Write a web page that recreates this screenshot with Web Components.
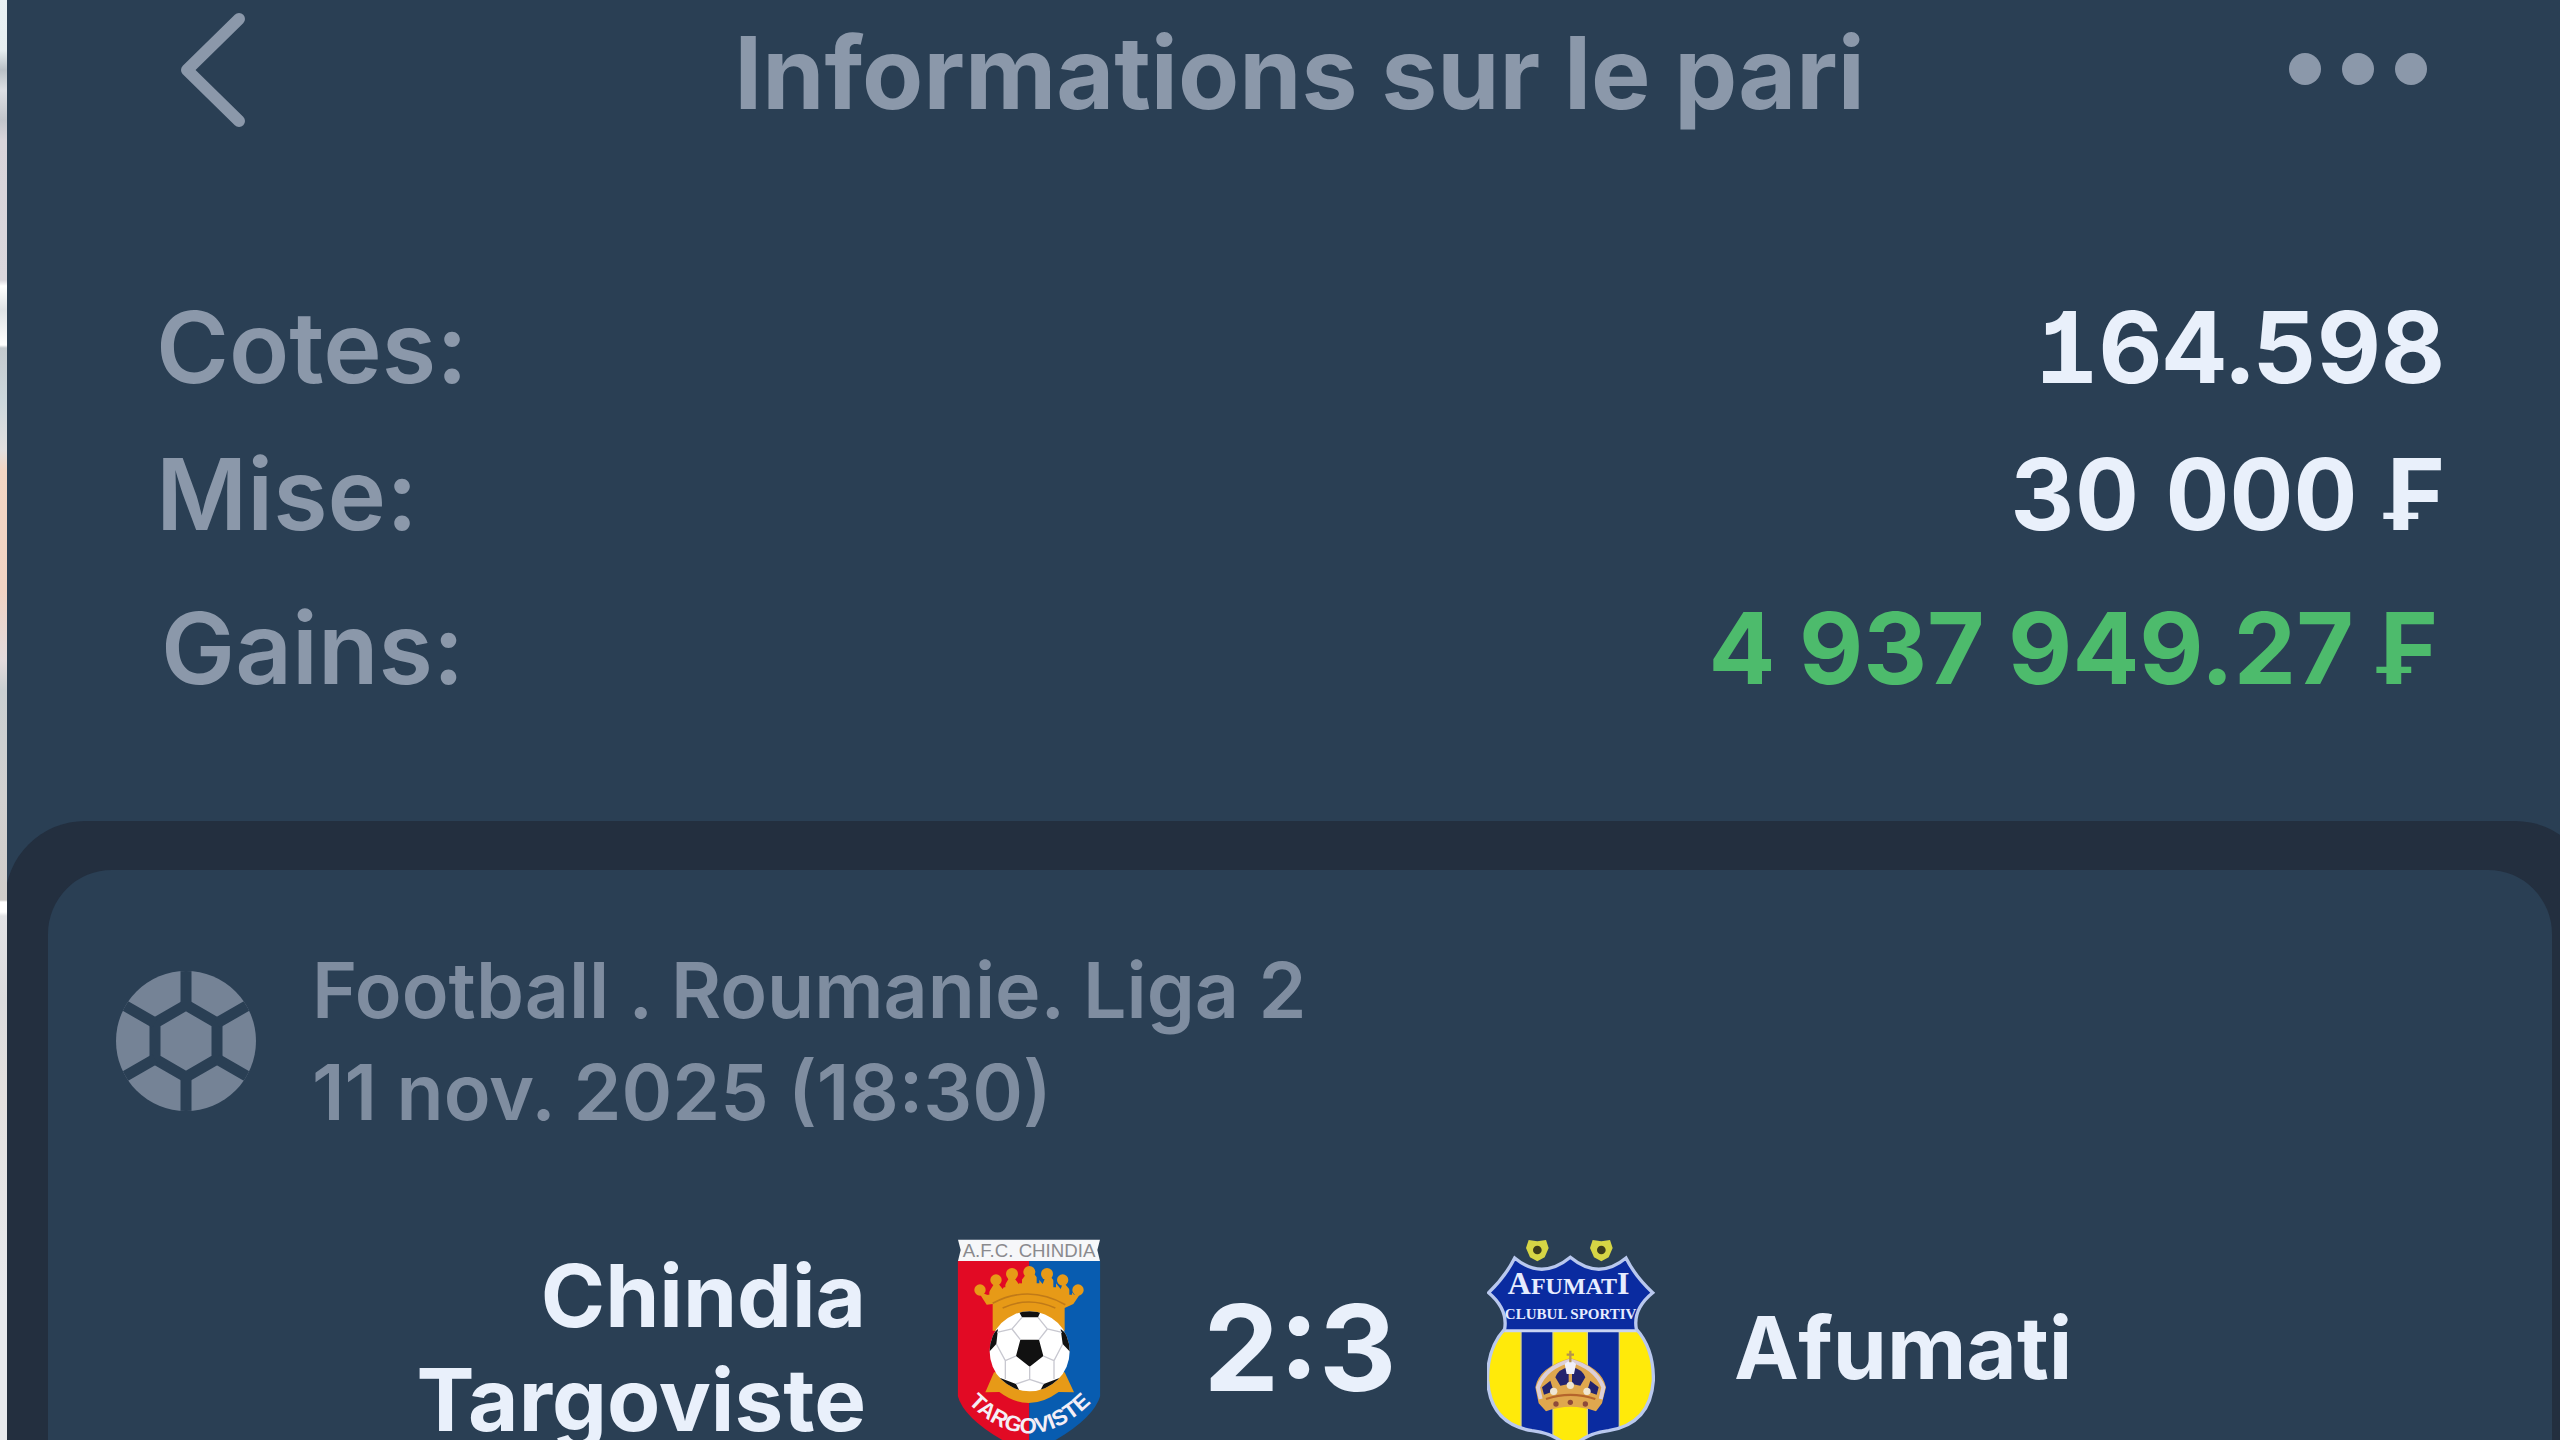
<!DOCTYPE html>
<html lang="fr">
<head>
<meta charset="utf-8">
<title>Informations sur le pari</title>
<style>
    body {
        margin: 0;
        height: 100vh;
        overflow: hidden;
        background: #2a3f54;
        color: #8b98aa;
        font-family: Inter, "Liberation Sans", sans-serif;
    }
</style>
</head>
<body>

<bet-page>
    <bet-header slot="header">Informations sur le pari</bet-header>
    <bet-summary slot="summary">
        <bet-row label="Cotes:">164.598</bet-row>
        <bet-row label="Mise:">30 000 ₣</bet-row>
        <bet-row label="Gains:" win>4 937 949.27 ₣</bet-row>
    </bet-summary>
    <match-card>
        <span slot="league">Football . Roumanie. Liga 2</span>
        <time slot="date" datetime="2025-11-11T18:30">11 nov. 2025 (18:30)</time>
        <span slot="home">Chindia Targoviste</span>
        <crest-chindia slot="home-crest"></crest-chindia>
        <span slot="score">2:3</span>
        <crest-afumati slot="away-crest"></crest-afumati>
        <span slot="away">Afumati</span>
    </match-card>
</bet-page>

<template id="bet-page">
    <style>
        :host { display: flex; height: 100%; }
        .edge {
            flex: 0 0 7px;
            background: linear-gradient(#e9f1f4 0, #e6eef1 50px, #b9c0c6 70px, #dcdfe4 90px, #c2c5cb 120px,
                #d8d4da 140px, #dad7dd 280px, #fff 286px, #dfe3e6 310px, #fff 345px, #c3c9ce 348px,
                #cbd7dd 400px, #e2e0e0 450px, #f3d6c3 470px, #f1d3c3 590px, #e3dbdd 660px,
                #c9cfd2 690px, #d2d1d0 800px, #d0cdca 900px, #fff 902px, #fff 912px,
                #e2e3e6 916px, #dcdcde 1000px, #e4e1df 1100px, #e8eaee 1300px);
        }
        .screen { flex: 1; min-width: 0; overflow: hidden; }
        /* the sheet is a little wider than the screen */
        .sheet {
            margin: 0 -35px 0 -2px;
            padding: 49px 43px 0;
            border-radius: 80px 80px 0 0;
            background: #232f3f;
        }
    </style>
    <div class="edge"></div>
    <main class="screen">
        <slot name="header"></slot>
        <slot name="summary"></slot>
        <div class="sheet"><slot></slot></div>
    </main>
</template>

<template id="bet-header">
    <style>
        :host { display: block; }
        header {
            display: grid;
            grid-template-columns: 1fr auto 1fr;
            align-items: start;
            padding: 0 132px 0 164px;
        }
        h1 { margin: 0; font-size: 100px; font-weight: 700; line-height: 146px; }
        button {
            justify-self: start;
            height: 139px;
            padding: 0;
            border: 0;
            background: none;
            color: inherit;
            cursor: pointer;
        }
        button:last-child { justify-self: end; }
        svg { display: block; }
    </style>
    <header>
        <button aria-label="Retour">
            <svg width="90" height="139" viewBox="0 0 90 139" fill="none" stroke="currentColor" stroke-width="12" stroke-linecap="round" stroke-linejoin="round">
                <path d="M68 19 L16 70 L68 121"/>
            </svg>
        </button>
        <h1><slot></slot></h1>
        <button aria-label="Plus">
            <svg width="140" height="139" viewBox="0 0 140 139" fill="currentColor">
                <circle cx="17" cy="69" r="16"/>
                <circle cx="70" cy="69" r="16"/>
                <circle cx="123" cy="69" r="16"/>
            </svg>
        </button>
    </header>
</template>

<template id="bet-summary">
    <style>
        :host { display: block; padding: 128px 115px 99px 149px; }
    </style>
    <slot></slot>
</template>

<template id="bet-row">
    <style>
        :host {
            display: flex;
            justify-content: space-between;
            font-size: 99px;
            line-height: 147px;
        }
        :host([win]) { padding: 7px 7px 0 5px; }
        .label { font-weight: 600; }
        .value { font-weight: 700; color: #e9f0fb; font-feature-settings: "tnum", "cv01"; }
        :host([win]) .value { color: #4dbb6c; font-feature-settings: normal; }
    </style>
    <span class="label"></span>
    <span class="value"><slot></slot></span>
</template>

<template id="match-card">
    <style>
        :host {
            display: block;
            padding: 69px 68px 0;
            border-radius: 64px 64px 0 0;
            background: #2a3f54;
        }
        .head {
            display: flex;
            align-items: center;
            gap: 56px;
            margin-bottom: 96px;
            color: #7f8da0;
            font-size: 77px;
            font-weight: 600;
            line-height: 102px;
        }
        .head svg { flex: none; }
        .info { display: flex; flex-direction: column; }
        .match {
            display: grid;
            grid-template-columns: 1fr 170px 216px 170px 1fr;
            column-gap: 78px;
            align-items: center;
            color: #e9f0fb;
            font-size: 87px;
            font-weight: 700;
            line-height: 104px;
        }
        .home { justify-self: end; max-width: 480px; text-align: right; }
        .crest { display: flex; justify-content: center; }
        .score { font-size: 120px; text-align: center; }
    </style>
    <div class="head">
        <svg width="140" height="140" viewBox="-70 -70 140 140">
            <defs>
                <clipPath id="ball"><circle r="70"/></clipPath>
            </defs>
            <circle r="70" fill="#758396"/>
            <g stroke="#2a3f54" stroke-width="11" fill="none" clip-path="url(#ball)">
                <path d="M0 -36 L31 -18 V18 L0 36 L-31 18 V-18 Z"/>
                <path d="M0 -36 V-72 M31 -18 L64 -37 M31 18 L64 37 M0 36 V72 M-31 18 L-64 37 M-31 -18 L-64 -37"/>
            </g>
        </svg>
        <div class="info">
            <slot name="league"></slot>
            <slot name="date"></slot>
        </div>
    </div>
    <div class="match">
        <div class="home"><slot name="home"></slot></div>
        <div class="crest"><slot name="home-crest"></slot></div>
        <div class="score"><slot name="score"></slot></div>
        <div class="crest"><slot name="away-crest"></slot></div>
        <div class="away"><slot name="away"></slot></div>
    </div>
</template>

<template id="crest-chindia">
    <style>
        :host { display: block; }
        svg { display: block; }
    </style>
    <svg width="144" height="218" viewBox="85 55 432 654" role="img" aria-label="Chindia Targoviste">
        <defs>
            <clipPath id="shield"><path d="M87 120 H515 V525 Q490 610 301 700 Q110 610 87 525 Z"/></clipPath>
            <clipPath id="football"><circle cx="303" cy="392" r="120"/></clipPath>
            <path id="arc" d="M124 552 Q300 724 482 552"/>
        </defs>
        <g clip-path="url(#shield)">
            <rect x="85" y="118" width="217" height="600" fill="#e20a24"/>
            <rect x="302" y="118" width="217" height="600" fill="#085cb0"/>
        </g>
        <path d="M88 57 H514 L506 88 L514 121 H88 L96 88 Z" fill="#f6f7f9"/>
        <text x="301" y="108" text-anchor="middle" font-family="Liberation Sans, sans-serif" font-size="56" font-weight="400" fill="#8a8a8e">A.F.C. CHINDIA</text>
        <!-- crown -->
        <g fill="#e79a17">
            <path d="M150 215 L174 252 L192 250 V330 H408 V262 L434 250 L458 215 L436 222 L404 184 L396 205 L356 156 L342 190 L308 150 H300 L270 190 L248 160 L222 205 L202 180 L176 222 Z"/>
            <circle cx="154" cy="208" r="17"/>
            <circle cx="202" cy="178" r="17"/>
            <circle cx="250" cy="160" r="18"/>
            <circle cx="302" cy="154" r="18"/>
            <circle cx="355" cy="160" r="18"/>
            <circle cx="402" cy="178" r="17"/>
            <circle cx="448" cy="208" r="17"/>
            <path d="M196 455 L170 515 L212 514 Q300 580 390 514 L436 515 L408 455 Z"/>
        </g>
        <g fill="none" stroke="#e20a24" stroke-width="8">
            <path d="M226 170 V200 M178 205 V222"/>
            <path d="M276 160 V188"/>
        </g>
        <g fill="none" stroke="#085cb0" stroke-width="8">
            <path d="M328 160 V188 M378 170 V200 M426 205 V222"/>
        </g>
        <path d="M192 248 Q300 190 410 252 M222 262 Q300 226 380 262" fill="none" stroke="#c07a18" stroke-width="5"/>
        <!-- football -->
        <circle cx="303" cy="392" r="120" fill="#fff"/>
        <g clip-path="url(#football)">
            <path d="M275 357 H331 L344 406 L303 438 L262 406 Z M268 268 H338 L328 290 H280 Z M180 350 L208 325 L203 370 L180 395 Z M426 350 L396 325 L402 370 L426 395 Z M205 468 L262 490 L275 515 L205 520 Z M402 468 L345 490 L332 515 L402 520 Z" fill="#111"/>
            <path d="M275 357 L250 325 M331 357 L356 325 M344 406 L376 420 M303 438 V476 M262 406 L230 420 M280 290 L250 325 L205 335 M328 290 L356 325 L400 335 M203 370 L230 420 V475 M402 370 L376 420 V475 M262 490 L303 476 L345 490" fill="none" stroke="#c8c8d0" stroke-width="4"/>
        </g>
        <text font-family="Liberation Sans, sans-serif" font-size="66" font-weight="700" fill="#f4eef6"><textPath href="#arc" startOffset="50%" text-anchor="middle">TARGOVISTE</textPath></text>
    </svg>
</template>

<template id="crest-afumati">
    <style>
        :host { display: block; }
        svg { display: block; }
    </style>
    <svg width="168" height="218" viewBox="85 55 504 654" role="img" aria-label="Afumati">
        <defs>
            <path id="outline" d="M168 112 Q250 180 335 110 Q420 180 502 112 Q530 168 582 216 Q522 265 533 325 Q586 385 584 480 Q575 610 450 630 Q370 640 335 690 Q300 640 220 630 Q95 610 87 480 Q84 385 138 325 Q148 265 90 216 Q140 168 168 112 Z"/>
            <clipPath id="body"><use href="#outline"/></clipPath>
        </defs>
        <g clip-path="url(#body)">
            <rect x="80" y="100" width="510" height="230" fill="#0a2ba0"/>
            <rect x="80" y="330" width="510" height="380" fill="#ffea0a"/>
            <rect x="187" y="330" width="96" height="380" fill="#0a2ba0"/>
            <rect x="386" y="330" width="96" height="380" fill="#0a2ba0"/>
            <path d="M187 330 V700 M283 330 V700 M386 330 V700 M482 330 V700" stroke="#d9d48a" stroke-width="4"/>
            <path d="M130 330 H540" stroke="#c9d4f4" stroke-width="9"/>
        </g>
        <use href="#outline" fill="none" stroke="#b9c8ee" stroke-width="10"/>
        <!-- two small flowers above the shield -->
        <g fill="#d6d545">
            <path d="M236 122 L214 110 L202 82 L210 58 L236 62 L262 58 L270 82 L258 110 Z"/>
            <path d="M428 122 L406 110 L394 82 L402 58 L428 62 L454 58 L462 82 L450 110 Z"/>
        </g>
        <g fill="#3c3c1c">
            <circle cx="236" cy="88" r="13"/>
            <circle cx="428" cy="88" r="13"/>
        </g>
        <g font-family="Liberation Serif, serif" font-weight="700" fill="#e6ecff" text-anchor="middle">
            <text x="330" y="219" font-size="72"><tspan font-size="96">A</tspan>FUMAT<tspan font-size="96">I</tspan></text>
            <text x="336" y="296" font-size="45">CLUBUL SPORTIV</text>
        </g>
        <!-- crown -->
        <path d="M240 548 L230 500 Q240 440 335 412 Q430 440 442 500 L430 548 L412 572 Q335 545 262 572 Z" fill="#dfa74e"/>
        <path d="M246 535 L238 500 Q260 440 335 420 Q410 440 434 500 L426 535" fill="none" stroke="#dccfd8" stroke-width="12"/>
        <path d="M290 470 Q300 445 330 440 V490 L305 495 Z M380 470 Q370 445 340 440 V490 L365 495 Z M250 500 L275 480 L285 512 L256 522 Z M420 500 L395 480 L385 512 L414 522 Z" fill="#23246e"/>
        <path d="M318 430 Q335 412 352 430 L346 460 H324 Z" fill="#f0f0fa"/>
        <path d="M335 390 V425 M324 402 H346" stroke="#b5934c" stroke-width="7"/>
        <g fill="#efe6d2">
            <circle cx="285" cy="512" r="11"/>
            <circle cx="335" cy="494" r="11"/>
            <circle cx="385" cy="512" r="11"/>
        </g>
        <path d="M262 535 Q335 510 410 535" fill="none" stroke="#b5652c" stroke-width="7"/>
        <g fill="#8d4a3a">
            <circle cx="292" cy="550" r="8"/>
            <circle cx="335" cy="545" r="8"/>
            <circle cx="380" cy="550" r="8"/>
        </g>
    </svg>
</template>

<script>
// Clones the template with the same id as the tag into the shadow root
class BaseElement extends HTMLElement {
    constructor() {
        super();
        const template = document.getElementById(this.localName);
        this.attachShadow({ mode: "open" }).appendChild(template.content.cloneNode(true));
    }
}

class BetRow extends BaseElement {
    connectedCallback() {
        this.shadowRoot.querySelector(".label").textContent = this.getAttribute("label");
    }
}

customElements.define("bet-page", class extends BaseElement {});
customElements.define("bet-header", class extends BaseElement {});
customElements.define("bet-summary", class extends BaseElement {});
customElements.define("bet-row", BetRow);
customElements.define("match-card", class extends BaseElement {});
customElements.define("crest-chindia", class extends BaseElement {});
customElements.define("crest-afumati", class extends BaseElement {});
</script>
</body>
</html>
